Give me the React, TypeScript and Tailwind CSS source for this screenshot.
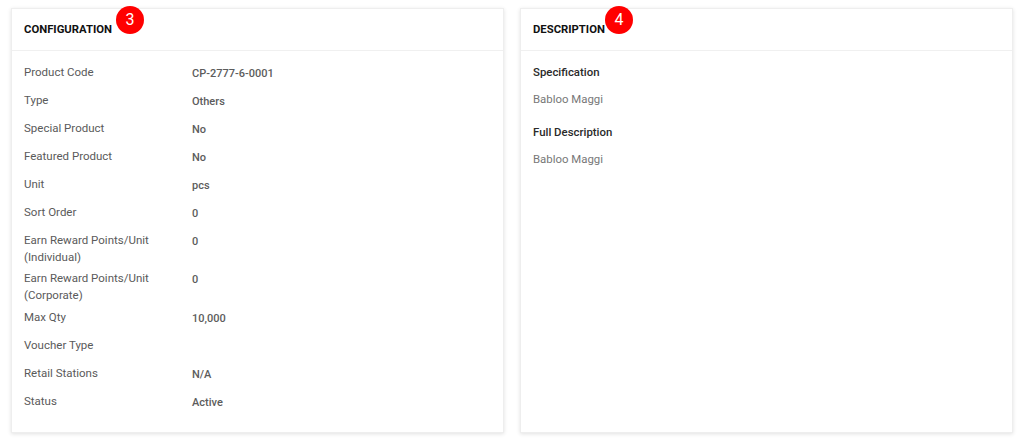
const rows: [string, string, string][] = [
  ["Product Code", "CP-2777-6-0001", "h-[28px]"],
  ["Type", "Others", "h-[28px]"],
  ["Special Product", "No", "h-[28px]"],
  ["Featured Product", "No", "h-[28px]"],
  ["Unit", "pcs", "h-[28px]"],
  ["Sort Order", "0", "h-[27.5px]"],
  ["Earn Reward Points/Unit (Individual)", "0", "h-[38.5px]"],
  ["Earn Reward Points/Unit (Corporate)", "0", "h-[38.5px]"],
  ["Max Qty", "10,000", "h-[28px]"],
  ["Voucher Type", "", "h-[28px]"],
  ["Retail Stations", "N/A", "h-[28px]"],
  ["Status", "Active", "h-[28px]"],
];

function Card({ title, badge, badgeLeft, children }: { title: string; badge: string; badgeLeft: string; children: React.ReactNode }) {
  return (
    <div className="relative flex-1 h-[425px] bg-white border border-[#eeeeee] shadow-[0_1px_4px_rgba(0,0,0,0.12)]">
      <div className="h-[42px] flex items-center pl-3 border-b border-[#f0f0f0] text-[11.3px] font-bold text-[#111111] pt-[1px]">
        {title}
      </div>
      <div className={`absolute top-[-3px] ${badgeLeft} w-[28px] h-[28px] rounded-full bg-[#ff0000] text-white text-[16px] flex items-center justify-center`}>
        {badge}
      </div>
      {children}
    </div>
  );
}

export default function App() {
  return (
    <div className="w-[1024px] h-[440px] bg-white overflow-hidden flex gap-4 px-[11px] pt-2 font-['Roboto',sans-serif]">
      <Card title="CONFIGURATION" badge="3" badgeLeft="left-[104px]">
        <div className="pl-3 pt-[13px] text-[11.5px] leading-[17px]">
          {rows.map(([label, value, h]) => (
            <div key={label} className={`flex ${h}`}>
              <div className="w-[168px] text-[#5a5a5a] pr-3">{label}</div>
              <div className="text-[#5c5c5c] font-medium text-[11px] pt-[1px]">{value}</div>
            </div>
          ))}
        </div>
      </Card>
      <Card title="DESCRIPTION" badge="4" badgeLeft="left-[84px]">
        <div className="pl-3 pt-[13px] text-[11.4px] leading-[17px]">
          <div className="font-medium text-[#2a2a2a] h-[27px]">Specification</div>
          <div className="text-[#777777] h-[33px]">Babloo Maggi</div>
          <div className="font-medium text-[#2a2a2a] h-[27px]">Full Description</div>
          <div className="text-[#777777]">Babloo Maggi</div>
        </div>
      </Card>
    </div>
  );
}
